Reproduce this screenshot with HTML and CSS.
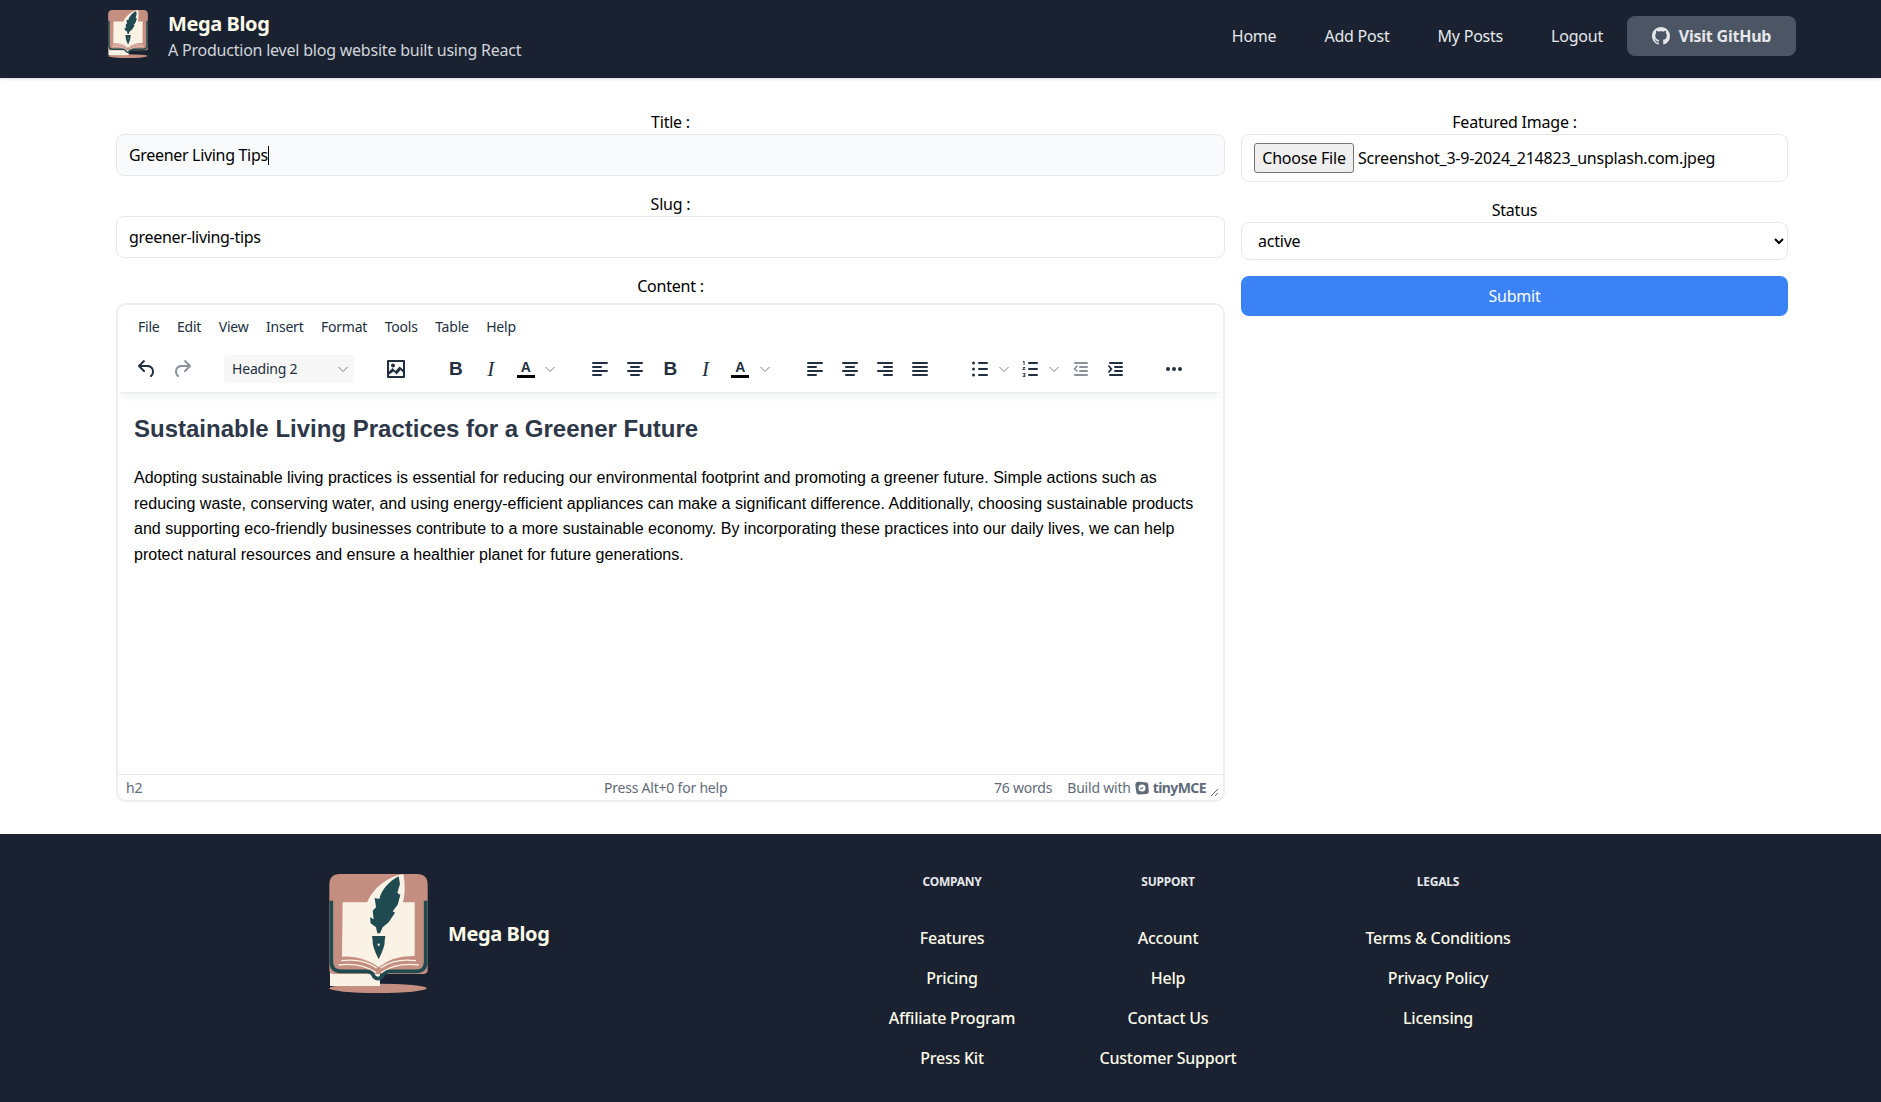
FILE: index.html
```html
<!DOCTYPE html>
<html lang="en">
<head>
    <meta charset="UTF-8">
    <meta name="viewport" content="width=device-width, initial-scale=1.0">
    <title>Mega Blog</title>
    <link rel="stylesheet" href="styles.css">
</head>

<body>
    <svg class="defs" width="0" height="0">
        <symbol id="logo" viewBox="0 0 295 357">
            <ellipse cx="146" cy="343" rx="146" ry="14" fill="#c48f80"/>
            <rect x="2" y="270" width="150" height="66" fill="#fbf2e6"/>
            <path d="M32 0H263Q295 0 295 32V288Q295 300 280 300H15Q0 300 0 288V32Q0 0 32 0Z" fill="#c48f80"/>
            <path d="M6 80V264Q6 292 36 292H112Q128 292 134 308Q146 320 158 308Q164 292 182 292H260Q289 292 289 264V80" fill="none" stroke="#1f4a4f" stroke-width="11"/>
            <path d="M40 85H256V246Q190 244 148 280Q100 244 38 248Z" fill="#fbf2e6"/>
            <path d="M36 260Q100 252 142 282M28 273Q95 265 140 296M260 260Q195 252 154 282M268 273Q200 265 156 296" fill="none" stroke="#fbf2e6" stroke-width="4"/>
            <path d="M222 0C170 8 125 50 112 90L118 170L175 190C195 150 240 90 222 0Z" fill="#fbf2e6"/>
            <path d="M208 7L212 30L204 56L213 63L205 92L190 112L197 116L178 145L160 160L152 178H144L140 160L124 148L122 130L133 136L130 110L140 100L136 72L150 75C155 50 180 20 208 7Z" fill="#1f4a4f"/>
            <path d="M128 186H168L166 200Q168 215 148 256Q128 215 130 200Z" fill="#1f4a4f"/>
            <circle cx="148" cy="212" r="3.500" fill="#fbf2e6"/>
        </symbol>
        <symbol id="i-undo" viewBox="0 0 24 24"><path d="M6.4 8H12c3.7 0 6.2 2 6.8 5.1.6 2.7-.4 5.6-2.3 6.8a1 1 0 0 1-1-1.8c1.1-.6 1.8-2.7 1.4-4.6-.5-2.1-2.1-3.500-4.900-3.500H6.400l3.300 3.300a1 1 0 1 1-1.400 1.400l-5-5a1 1 0 0 1 0-1.400l5-5a1 1 0 0 1 1.400 1.400L6.400 8Z"/></symbol>
        <symbol id="i-redo" viewBox="0 0 24 24"><path d="M17.600 8H12c-3.700 0-6.200 2-6.800 5.100-.6 2.700.4 5.600 2.300 6.800a1 1 0 0 0 1-1.800c-1.100-.6-1.800-2.700-1.400-4.600.5-2.100 2.100-3.500 4.900-3.500h5.600l-3.300 3.300a1 1 0 1 0 1.400 1.400l5-5a1 1 0 0 0 0-1.400l-5-5a1 1 0 0 0-1.400 1.400L17.600 8Z"/></symbol>
        <symbol id="i-image" viewBox="0 0 24 24"><path d="M4 3h16a1 1 0 0 1 1 1v16a1 1 0 0 1-1 1H4a1 1 0 0 1-1-1V4a1 1 0 0 1 1-1Zm1 2v9.600l3.600-3.600 3 3 3.900-4.600L19 12.500V5H5Zm14 10.500-2.400-2.600-3.900 4.600-3.100-3.100L5 17.500V19h14v-3.500ZM9 6.500a2 2 0 1 1 0 4 2 2 0 0 1 0-4Z" fill-rule="evenodd"/></symbol>
        <symbol id="i-left" viewBox="0 0 24 24"><path d="M5 5h14a1 1 0 0 1 0 2H5a1 1 0 1 1 0-2Zm0 4h8a1 1 0 0 1 0 2H5a1 1 0 1 1 0-2Zm0 4h14a1 1 0 0 1 0 2H5a1 1 0 0 1 0-2Zm0 4h8a1 1 0 0 1 0 2H5a1 1 0 0 1 0-2Z"/></symbol>
        <symbol id="i-center" viewBox="0 0 24 24"><path d="M5 5h14a1 1 0 0 1 0 2H5a1 1 0 1 1 0-2Zm3 4h8a1 1 0 0 1 0 2H8a1 1 0 1 1 0-2Zm-3 4h14a1 1 0 0 1 0 2H5a1 1 0 0 1 0-2Zm3 4h8a1 1 0 0 1 0 2H8a1 1 0 0 1 0-2Z"/></symbol>
        <symbol id="i-right" viewBox="0 0 24 24"><path d="M5 5h14a1 1 0 0 1 0 2H5a1 1 0 1 1 0-2Zm6 4h8a1 1 0 0 1 0 2h-8a1 1 0 0 1 0-2Zm-6 4h14a1 1 0 0 1 0 2H5a1 1 0 0 1 0-2Zm6 4h8a1 1 0 0 1 0 2h-8a1 1 0 0 1 0-2Z"/></symbol>
        <symbol id="i-justify" viewBox="0 0 24 24"><path d="M5 5h14a1 1 0 0 1 0 2H5a1 1 0 1 1 0-2Zm0 4h14a1 1 0 0 1 0 2H5a1 1 0 1 1 0-2Zm0 4h14a1 1 0 0 1 0 2H5a1 1 0 0 1 0-2Zm0 4h14a1 1 0 0 1 0 2H5a1 1 0 0 1 0-2Z"/></symbol>
        <symbol id="i-bullets" viewBox="0 0 24 24"><path d="M11 5h8a1 1 0 0 1 0 2h-8a1 1 0 0 1 0-2Zm0 6h8a1 1 0 0 1 0 2h-8a1 1 0 0 1 0-2Zm0 6h8a1 1 0 0 1 0 2h-8a1 1 0 0 1 0-2ZM5.500 4.500a1.500 1.500 0 1 1 0 3 1.500 1.500 0 0 1 0-3Zm0 6a1.500 1.500 0 1 1 0 3 1.500 1.500 0 0 1 0-3Zm0 6a1.500 1.500 0 1 1 0 3 1.500 1.500 0 0 1 0-3Z"/></symbol>
        <symbol id="i-numbers" viewBox="0 0 24 24"><path d="M11 5h8a1 1 0 0 1 0 2h-8a1 1 0 0 1 0-2Zm0 6h8a1 1 0 0 1 0 2h-8a1 1 0 0 1 0-2Zm0 6h8a1 1 0 0 1 0 2h-8a1 1 0 0 1 0-2ZM5 4h1.500v4H5.600V5H5V4Zm-.4 6h2.600v.8L5.700 12.200h1.600v.8H4.500v-.8l1.600-1.400H4.600V10Zm0 6h2.700v4H4.600v-.8h1.800v-.8H5.200v-.7h1.200v-.9H4.600V16Z"/></symbol>
        <symbol id="i-outdent" viewBox="0 0 24 24"><path d="M7 5h12a1 1 0 0 1 0 2H7a1 1 0 1 1 0-2Zm5 4h7a1 1 0 0 1 0 2h-7a1 1 0 0 1 0-2Zm0 4h7a1 1 0 0 1 0 2h-7a1 1 0 0 1 0-2Zm-5 4h12a1 1 0 0 1 0 2H7a1 1 0 0 1 0-2Zm1.600-8.700a.8.800 0 0 1 1.100 1.100L7.700 12l2 1.600a.8.800 0 0 1-1.100 1.100L5.500 12l3.100-3.700Z"/></symbol>
        <symbol id="i-indent" viewBox="0 0 24 24"><path d="M7 5h12a1 1 0 0 1 0 2H7a1 1 0 1 1 0-2Zm5 4h7a1 1 0 0 1 0 2h-7a1 1 0 0 1 0-2Zm0 4h7a1 1 0 0 1 0 2h-7a1 1 0 0 1 0-2Zm-5 4h12a1 1 0 0 1 0 2H7a1 1 0 0 1 0-2ZM6.300 8.300 9.500 12l-3.200 3.700a.8.800 0 0 1-1.100-1.100L7.200 12l-2-2.600a.8.800 0 0 1 1.100-1.100Z"/></symbol>
        <symbol id="i-more" viewBox="0 0 24 24"><path d="M6 10a2 2 0 1 1 0 4 2 2 0 0 1 0-4Zm6 0a2 2 0 1 1 0 4 2 2 0 0 1 0-4Zm6 0a2 2 0 1 1 0 4 2 2 0 0 1 0-4Z"/></symbol>
        <symbol id="i-chevron" viewBox="0 0 10 10"><path d="M.5 3 5 7.500 9.500 3" fill="none" stroke="currentColor" stroke-width="1"/></symbol>
    </svg>

    <header class="site-header">
        <a class="brand" href="#">
            <svg class="brand-logo"><use href="#logo"/></svg>
            <span class="brand-text">
                <span class="brand-name">Mega Blog</span>
                <span class="brand-sub">A Production level blog website built using React</span>
            </span>
        </a>
        <nav class="site-nav">
            <a href="#">Home</a>
            <a href="#">Add Post</a>
            <a href="#">My Posts</a>
            <a href="#">Logout</a>
            <a class="github-btn" href="#">
                <svg viewBox="0 0 16 16" width="18" height="18" fill="currentColor"><path d="M8 0C3.580 0 0 3.580 0 8c0 3.540 2.290 6.530 5.470 7.590.4.070.55-.17.55-.38 0-.19-.01-.82-.01-1.490-2.010.37-2.530-.49-2.690-.94-.09-.23-.48-.94-.82-1.130-.28-.15-.68-.52-.01-.53.63-.01 1.080.58 1.230.82.72 1.210 1.870.87 2.330.66.07-.52.28-.87.51-1.070-1.780-.2-3.640-.89-3.640-3.950 0-.87.31-1.590.82-2.150-.08-.2-.36-1.020.08-2.120 0 0 .67-.21 2.200.82.64-.18 1.320-.27 2-.27s1.360.09 2 .27c1.530-1.040 2.200-.82 2.200-.82.44 1.100.16 1.920.08 2.120.51.56.82 1.270.82 2.150 0 3.070-1.870 3.750-3.650 3.950.29.25.54.73.54 1.480 0 1.070-.01 1.930-.01 2.200 0 .21.15.46.55.38A8.010 8.010 0 0 0 16 8c0-4.420-3.580-8-8-8Z"/></svg>
                Visit GitHub
            </a>
        </nav>
    </header>

    <main class="post-form">
        <section class="col-main">
            <label class="field-label">Title :</label>
            <div class="text-input title-input">Greener Living Tips<span class="caret"></span></div>

            <label class="field-label">Slug :</label>
            <input class="text-input" type="text" value="greener-living-tips">

            <label class="field-label">Content :</label>
            <div class="editor">
                <div class="editor-head">
                    <div class="menubar">
                        <span>File</span><span>Edit</span><span>View</span><span>Insert</span><span>Format</span><span>Tools</span><span>Table</span><span>Help</span>
                    </div>
                    <div class="toolbar">
                        <div class="tb-group">
                            <span class="tb-btn"><svg><use href="#i-undo"/></svg></span>
                            <span class="tb-btn off"><svg><use href="#i-redo"/></svg></span>
                        </div>
                        <div class="tb-group">
                            <span class="tb-select">Heading 2<svg class="tb-chev"><use href="#i-chevron"/></svg></span>
                        </div>
                        <div class="tb-group">
                            <span class="tb-btn"><svg><use href="#i-image"/></svg></span>
                        </div>
                        <div class="tb-group">
                            <span class="tb-btn letter bold">B</span>
                            <span class="tb-btn letter italic">I</span>
                            <span class="tb-btn letter color">A</span>
                            <span class="tb-more"><svg class="tb-chev"><use href="#i-chevron"/></svg></span>
                        </div>
                        <div class="tb-group">
                            <span class="tb-btn"><svg><use href="#i-left"/></svg></span>
                            <span class="tb-btn"><svg><use href="#i-center"/></svg></span>
                            <span class="tb-btn letter bold">B</span>
                            <span class="tb-btn letter italic">I</span>
                            <span class="tb-btn letter color">A</span>
                            <span class="tb-more"><svg class="tb-chev"><use href="#i-chevron"/></svg></span>
                        </div>
                        <div class="tb-group">
                            <span class="tb-btn"><svg><use href="#i-left"/></svg></span>
                            <span class="tb-btn"><svg><use href="#i-center"/></svg></span>
                            <span class="tb-btn"><svg><use href="#i-right"/></svg></span>
                            <span class="tb-btn"><svg><use href="#i-justify"/></svg></span>
                        </div>
                        <div class="tb-group">
                            <span class="tb-btn"><svg><use href="#i-bullets"/></svg></span>
                            <span class="tb-more"><svg class="tb-chev"><use href="#i-chevron"/></svg></span>
                            <span class="tb-btn"><svg><use href="#i-numbers"/></svg></span>
                            <span class="tb-more"><svg class="tb-chev"><use href="#i-chevron"/></svg></span>
                            <span class="tb-btn off"><svg><use href="#i-outdent"/></svg></span>
                            <span class="tb-btn"><svg><use href="#i-indent"/></svg></span>
                        </div>
                        <div class="tb-group">
                            <span class="tb-btn"><svg><use href="#i-more"/></svg></span>
                        </div>
                    </div>
                </div>
                <div class="editor-body">
                    <h2>Sustainable Living Practices for a Greener Future</h2>
                    <p>Adopting sustainable living practices is essential for reducing our environmental footprint and promoting a greener future. Simple actions such as reducing waste, conserving water, and using energy-efficient appliances can make a significant difference. Additionally, choosing sustainable products and supporting eco-friendly businesses contribute to a more sustainable economy. By incorporating these practices into our daily lives, we can help protect natural resources and ensure a healthier planet for future generations.</p>
                </div>
                <div class="statusbar">
                    <span class="status-path">h2</span>
                    <span class="status-help">Press Alt+0 for help</span>
                    <span class="status-words">76 words</span>
                    <span class="status-brand">Build with
                        <svg viewBox="0 0 14 14" width="14" height="14"><path d="M4 .8 11.500 1.500a2 2 0 0 1 1.700 1.700l.6 7a2.500 2.500 0 0 1-2.300 2.700l-7.500.6a2.500 2.500 0 0 1-2.700-2.300L.3 4A3 3 0 0 1 4 .8Zm3 2.700a3.500 3.500 0 1 0 0 7 3.500 3.500 0 0 0 0-7ZM5.300 7.300l3-1.400v1.400l-3 1.400V7.300Z" fill="#5f6b7a" fill-rule="evenodd"/></svg>
                        <b>tinyMCE</b>
                    </span>
                    <svg class="status-grip" viewBox="0 0 10 10" width="10" height="10"><path d="M9 2 2 9M9 6 6 9" stroke="#5f6b7a" fill="none"/></svg>
                </div>
            </div>
        </section>

        <aside class="col-side">
            <label class="field-label">Featured Image :</label>
            <div class="file-input">
                <button class="file-btn" type="button">Choose File</button>
                <span>Screenshot_3-9-2024_214823_unsplash.com.jpeg</span>
            </div>

            <label class="field-label">Status</label>
            <select class="status-select">
                <option>active</option>
                <option>inactive</option>
            </select>

            <button class="submit-btn" type="submit">Submit</button>
        </aside>
    </main>

    <footer class="site-footer">
        <div class="footer-brand">
            <svg class="footer-logo"><use href="#logo"/></svg>
            <span>Mega Blog</span>
        </div>
        <div class="footer-col">
            <h3>Company</h3>
            <a href="#">Features</a>
            <a href="#">Pricing</a>
            <a href="#">Affiliate Program</a>
            <a href="#">Press Kit</a>
        </div>
        <div class="footer-col">
            <h3>Support</h3>
            <a href="#">Account</a>
            <a href="#">Help</a>
            <a href="#">Contact Us</a>
            <a href="#">Customer Support</a>
        </div>
        <div class="footer-col wide">
            <h3>Legals</h3>
            <a href="#">Terms &amp; Conditions</a>
            <a href="#">Privacy Policy</a>
            <a href="#">Licensing</a>
        </div>
    </footer>
</body>
</html>
```

FILE: styles.css
```css
* {
    box-sizing: border-box;
}

body {
    font-family: "Noto Sans", sans-serif;
    letter-spacing: -0.22px;
    margin: 0;
    background: #fff;
    color: #000;
    font-size: 16px;
    line-height: 24px;
}

a {
    color: inherit;
    text-decoration: none;
}

.defs {
    position: absolute;
}

/* header */
.site-header {
    height: 78px;
    background: #1a2231;
    display: flex;
    justify-content: space-between;
    align-items: center;
    padding: 0 85px 6px 108px;
    box-shadow: 0 1px 3px rgba(0, 0, 0, 0.15);
}

.brand {
    display: flex;
    align-items: flex-start;
    gap: 20px;
}

.brand-logo {
    width: 40px;
    height: 48px;
}

.brand-text {
    display: flex;
    flex-direction: column;
}

.brand-name {
    color: #fefae8;
    font-size: 20px;
    font-weight: 700;
    line-height: 28px;
    letter-spacing: -0.4px;
}

.brand-sub {
    color: #d1d5db;
    line-height: 24px;
}

.site-nav {
    display: flex;
    align-items: center;
    color: #e5e7eb;
}

.site-nav a {
    padding: 8px 24px;
}

.site-nav .github-btn {
    display: flex;
    align-items: center;
    justify-content: center;
    gap: 9px;
    width: 169px;
    height: 40px;
    padding: 0;
    border-radius: 8px;
    background: #4b5563;
    font-weight: 700;
}

/* form */
.post-form {
    display: flex;
    padding: 32px 93px 32px 116px;
    gap: 16px;
}

.col-main {
    width: 1109px;
    flex: none;
}

.col-side {
    flex: 1;
}

.field-label {
    display: block;
    text-align: center;
}

.text-input {
    display: block;
    width: 100%;
    height: 42px;
    margin-bottom: 16px;
    padding: 8px 12px;
    border: 1px solid #e5e7eb;
    border-radius: 8px;
    background: #fff;
    color: #000;
    font: inherit;
    letter-spacing: -0.32px;
    outline: none;
}

.title-input {
    background: #f9fafb;
}

.caret {
    display: inline-block;
    width: 1px;
    height: 19px;
    background: #000;
    vertical-align: -4px;
}

.col-main .editor {
    margin-top: 5px;
}

/* tinymce */
.editor {
    display: flex;
    flex-direction: column;
    height: 499px;
    border: 2px solid #eee;
    border-radius: 10px;
    overflow: hidden;
    color: #222f3e;
}

.editor-head {
    height: 87px;
    padding-top: 5px;
    box-shadow: 0 2px 2px -2px rgba(34, 47, 62, 0.1), 0 8px 8px -4px rgba(34, 47, 62, 0.07);
    position: relative;
}

.menubar {
    display: flex;
    gap: 17.5px;
    height: 34px;
    padding-left: 20px;
    align-items: center;
    font-size: 14px;
}

.toolbar {
    display: flex;
    height: 40px;
    margin-top: 5px;
    padding-left: 11.5px;
    align-items: center;
    gap: 24.6px;
}

.tb-group {
    display: flex;
    align-items: center;
}

.tb-btn {
    display: flex;
    flex: none;
    width: 35px;
    height: 28px;
    align-items: center;
    justify-content: center;
    fill: #222f3e;
    color: #222f3e;
}

.tb-btn svg {
    width: 24px;
    height: 24px;
}

.tb-btn.off {
    fill: #8a929b;
}

.tb-more {
    display: flex;
    width: 16px;
    margin-left: -1px;
    justify-content: center;
}

.tb-chev {
    width: 10px;
    height: 10px;
    color: #7a838d;
}

.tb-select {
    display: flex;
    width: 130px;
    height: 28px;
    padding: 0 6px 0 8px;
    justify-content: space-between;
    align-items: center;
    border-radius: 3px;
    background: #f7f7f7;
    font-size: 14px;
    color: #222f3e;
}

.letter {
    font-family: "Liberation Sans", sans-serif;
    letter-spacing: 0;
}

.letter.bold {
    font-size: 19px;
    font-weight: 700;
}

.letter.italic {
    font-family: "Liberation Serif", serif;
    font-size: 21px;
    font-style: italic;
}

.letter.color {
    flex-direction: column;
    font-size: 14px;
    font-weight: 700;
    line-height: 15px;
}

.letter.color::after {
    content: "";
    width: 18px;
    height: 3px;
    background: #000;
}

.editor-body {
    flex: 1;
    padding: 20px 14px 0 16px;
    font-family: "Liberation Sans", sans-serif;
    letter-spacing: 0;
    color: #000;
}

.editor-body h2 {
    margin: 0 0 19px;
    font-size: 24px;
    line-height: 34px;
    color: #2d3748;
}

.editor-body p {
    margin: 0;
    line-height: 25.6px;
}

.statusbar {
    display: flex;
    height: 26px;
    flex: none;
    align-items: center;
    padding: 0 4px 0 8px;
    border-top: 1px solid #e5e7eb;
    font-size: 14px;
    color: #5f6b7a;
    white-space: nowrap;
}

.status-path {
    width: 478px;
}

.status-words {
    margin: 0 15px 0 auto;
}

.status-brand {
    display: flex;
    align-items: center;
    gap: 4px;
    letter-spacing: -0.2px;
}

.status-brand b {
    letter-spacing: -0.6px;
}

.status-grip {
    margin: 8px 0 0 3px;
}

/* right column */
.file-input {
    display: flex;
    align-items: center;
    gap: 4px;
    height: 48px;
    margin-bottom: 16px;
    padding: 0 12px;
    border: 1px solid #e5e7eb;
    border-radius: 8px;
}

.file-btn {
    height: 30px;
    width: 100px;
    padding: 0;
    border: 1px solid #767676;
    border-radius: 3px;
    background: #efefef;
    color: #000;
    font: inherit;
    letter-spacing: inherit;
}

.status-select {
    display: block;
    width: 100%;
    height: 38px;
    margin-bottom: 16px;
    padding: 0 8px 0 12px;
    border: 1px solid #e5e7eb;
    border-radius: 8px;
    background: #fff;
    color: #000;
    font: inherit;
    letter-spacing: inherit;
}

.submit-btn {
    display: block;
    width: 100%;
    height: 40px;
    border: none;
    border-radius: 8px;
    background: #3b82f6;
    color: #fff;
    font: inherit;
    letter-spacing: inherit;
}

/* footer */
.site-footer {
    display: flex;
    height: 268px;
    padding: 40px 0 0 329px;
    background: #1a2231;
    color: #fefae8;
}

.footer-brand {
    display: flex;
    width: 515px;
    height: 119px;
    align-items: center;
    gap: 20px;
    font-size: 20px;
    font-weight: 700;
    letter-spacing: -0.4px;
}

.footer-logo {
    width: 99px;
    height: 119px;
}

.footer-col {
    display: flex;
    flex-direction: column;
    width: 216px;
    align-items: center;
    font-weight: 500;
}

.footer-col.wide {
    width: 324px;
}

.footer-col h3 {
    margin: 0 0 36px;
    color: #e5e7eb;
    font-size: 12px;
    font-weight: 700;
    line-height: 16px;
    text-transform: uppercase;
}

.footer-col a {
    margin-bottom: 16px;
}
```
